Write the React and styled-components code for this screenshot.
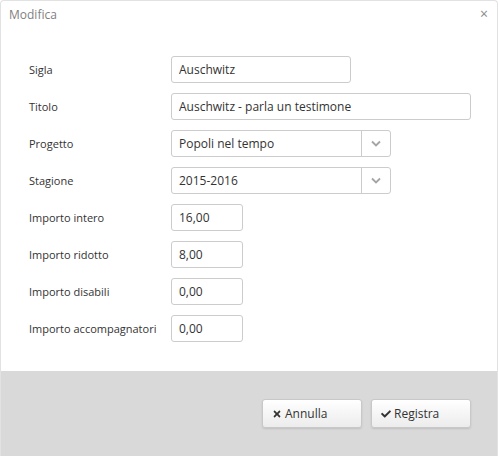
import { styled, createGlobalStyle } from "styled-components";
import { FaTimes, FaCheck } from "react-icons/fa";

const GlobalStyle = createGlobalStyle`
  html, body {
    margin: 0;
    padding: 0;
    background: #ffffff;
    font-family: "Open Sans", "Liberation Sans", sans-serif;
  }
`;

const fields = [
  { label: "Sigla", value: "Auschwitz", width: 180 },
  { label: "Titolo", value: "Auschwitz - parla un testimone", width: 300 },
  { label: "Progetto", value: "Popoli nel tempo", width: 220, select: true },
  { label: "Stagione", value: "2015-2016", width: 220, select: true },
  { label: "Importo intero", value: "16,00", width: 72 },
  { label: "Importo ridotto", value: "8,00", width: 72 },
  { label: "Importo disabili", value: "0,00", width: 72 },
  { label: "Importo accompagnatori", value: "0,00", width: 72 },
];

function Chevron() {
  return (
    <svg width="10" height="7" viewBox="0 0 10 7">
      <path d="M1 1.5 L5 5.5 L9 1.5" fill="none" stroke="#a5a5a5" strokeWidth="1.8" />
    </svg>
  );
}

export default function App() {
  return (
    <>
      <GlobalStyle />
      <Dialog>
        <Header>
          <Title>Modifica</Title>
          <Close>×</Close>
        </Header>
        <Body>
          {fields.map((f) => (
            <Row key={f.label}>
              <Label>{f.label}</Label>
              {f.select ? (
                <Select $width={f.width}>
                  <SelectValue>{f.value}</SelectValue>
                  <SelectArrow>
                    <Chevron />
                  </SelectArrow>
                </Select>
              ) : (
                <Input $width={f.width} defaultValue={f.value} />
              )}
            </Row>
          ))}
        </Body>
        <Footer>
          <Button>
            <FaTimes size={10} />
            Annulla
          </Button>
          <Button>
            <FaCheck size={10} />
            Registra
          </Button>
        </Footer>
      </Dialog>
    </>
  );
}

const Dialog = styled.div`
  width: 498px;
  height: 456px;
  box-sizing: border-box;
  border: 1px solid #e2e2e2;
  border-bottom: none;
  border-radius: 4px 4px 0 0;
  display: flex;
  flex-direction: column;
  overflow: hidden;
`;

const Header = styled.div`
  height: 27px;
  display: flex;
  align-items: center;
  justify-content: space-between;
  padding: 0 9px 0 8px;
`;

const Title = styled.span`
  font-size: 12px;
  color: #7f7f7f;
`;

const Close = styled.span`
  font-size: 14px;
  color: #8a8a8a;
  line-height: 1;
  margin-top: -2px;
`;

const Body = styled.div`
  display: flex;
  flex-direction: column;
  gap: 10px;
  padding: 28px 26px 29px 28px;
`;

const Row = styled.div`
  display: grid;
  grid-template-columns: 142px auto;
  align-items: center;
  height: 27px;
`;

const Label = styled.label`
  font-size: 11px;
  color: #333;
`;

const Input = styled.input`
  width: ${({ $width }) => $width}px;
  height: 27px;
  box-sizing: border-box;
  border: 1px solid #cccccc;
  border-radius: 3px;
  padding: 0 7px;
  font-family: "Open Sans", "Liberation Sans", sans-serif;
  font-size: 12px;
  color: #333;
  outline: none;
`;

const Select = styled.div`
  width: ${({ $width }) => $width}px;
  height: 27px;
  box-sizing: border-box;
  border: 1px solid #cccccc;
  border-radius: 3px;
  display: flex;
  align-items: stretch;
`;

const SelectValue = styled.span`
  flex: 1;
  display: flex;
  align-items: center;
  padding: 0 7px;
  font-size: 12px;
  color: #333;
`;

const SelectArrow = styled.span`
  width: 28px;
  border-left: 1px solid #cccccc;
  display: flex;
  align-items: center;
  justify-content: center;
`;

const Footer = styled.div`
  flex: 1;
  background: #d9d9d9;
  display: flex;
  justify-content: flex-end;
  align-items: flex-start;
  gap: 9px;
  padding: 28px 26px 0 0;
`;

const Button = styled.button`
  width: 100px;
  height: 29px;
  display: flex;
  align-items: center;
  gap: 3px;
  padding: 0 9px;
  box-sizing: border-box;
  border: 1px solid #c8c8c8;
  border-radius: 3px;
  background: linear-gradient(#ffffff, #ececec);
  box-shadow: 0 1px 2px rgba(0, 0, 0, 0.12);
  font-family: "Open Sans", "Liberation Sans", sans-serif;
  font-size: 12px;
  color: #333;
  cursor: pointer;
`;
